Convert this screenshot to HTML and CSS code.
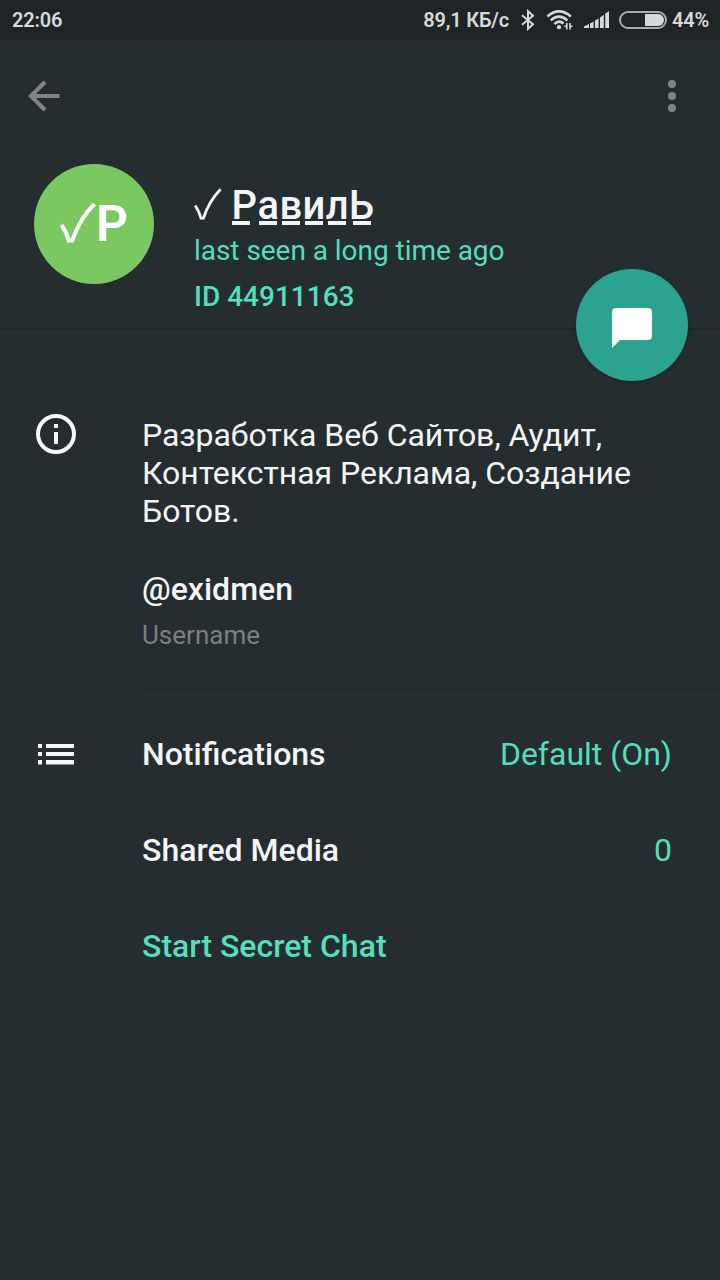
FILE: index.html
```
<!DOCTYPE html>
<html lang="en">
<head>
  <meta charset="UTF-8">
  <title>Profile</title>
  <link rel="stylesheet" href="styles.css">
</head>
<body>
  <!-- Status bar -->
  <div class="status-bar">
    <span class="clock">22:06</span>
    <span class="speed">89,1 КБ/с</span>
    <svg class="bluetooth" width="16" height="22" viewBox="0 0 16 22" fill="none" stroke="#d5d9da" stroke-width="2">
      <path d="M2 6.2L13 15.2L8 19.8V2.2L13 6.8L2 15.8"/>
    </svg>
    <svg class="wifi" width="28" height="22" viewBox="0 0 28 22" fill="none" stroke="#d5d9da" stroke-width="2.6">
      <path d="M1.4 7.4Q13 -2.6 24.8 7.4M4.8 11.4Q13 4 21.4 11.4M8.4 15Q13 10.6 17.6 14.6"/>
      <circle cx="13" cy="18.2" r="2.1" fill="#d5d9da" stroke="none"/>
      <path d="M20.8 14V20.4M24 14V20.4M18.4 17.2H21M24 17.2H26.4" stroke-width="1.6"/>
    </svg>
    <svg class="signal" width="26" height="18" viewBox="0 0 26 18" fill="#d5d9da">
      <path d="M0 17V15.5L5 13V17ZM6 17V12.4L9.6 10.4V17ZM11 17V9.6L14.6 7.4V17ZM16 17V6.4L19.8 3.8V17ZM21.2 17V2.8L25 0V17Z"/>
    </svg>
    <div class="battery"><div class="battery-level"></div></div>
    <span>44%</span>
  </div>

  <!-- Toolbar -->
  <div class="toolbar">
    <svg width="32" height="32" viewBox="0 0 32 32" fill="none" stroke="#828586" stroke-width="4">
      <path d="M31.5 16H3M17 2L3 16L17 30"/>
    </svg>
    <svg width="8" height="32" viewBox="0 0 8 32" fill="#828586">
      <circle cx="4" cy="4" r="4"/>
      <circle cx="4" cy="16" r="4"/>
      <circle cx="4" cy="28" r="4"/>
    </svg>
  </div>

  <div class="profile">
    <div class="avatar">
      <svg width="36" height="42" viewBox="0 0 36 42" fill="none" stroke="#fff" stroke-width="4">
        <path d="M1.5 22Q6.5 29 8.7 37.6H12.2Q20 15 34.5 1"/>
      </svg>
      <span>P</span>
    </div>
    <div class="profile-info">
      <h1>
        <svg width="28" height="32" viewBox="0 0 28 32" fill="none" stroke="#f3f5f6" stroke-width="2.8">
          <path d="M1.2 17.5Q5 23 7 30.2H9.4Q15 13 26.6 1.2"/>
        </svg>
        <b>Р</b><b>а</b><b>в</b><b>и</b><b>л</b><b>Ь</b>
      </h1>
      <p class="last-seen">last seen a long time ago</p>
      <p class="user-id">ID 44911163</p>
    </div>
    <div class="message-button">
      <svg width="40" height="40" viewBox="0 0 40 40" fill="#fff">
        <path d="M4 0H36Q40 0 40 4V28Q40 32 36 32H8L0 40V4Q0 0 4 0Z"/>
      </svg>
    </div>
  </div>

  <div class="section about">
    <svg width="40" height="40" viewBox="0 0 40 40" fill="#f6f8f9">
      <circle cx="20" cy="20" r="18" fill="none" stroke="#f6f8f9" stroke-width="4"/>
      <path d="M18 10H22V14H18ZM18 18H22V30H18Z"/>
    </svg>
    <div class="content">
      <p class="bio">Разработка Веб Сайтов, Аудит, Контекстная Реклама, Создание Ботов.</p>
      <p class="username">@exidmen</p>
      <p class="label">Username</p>
    </div>
  </div>

  <div class="section settings">
    <svg width="36" height="21" viewBox="0 0 36 21" fill="#f6f8f9">
      <path d="M0 0H4V4H0ZM8 0H36V4H8ZM0 8H4V12H0ZM8 8H36V12H8ZM0 16H4V20.5H0ZM8 16H36V20.5H8Z"/>
    </svg>
    <div class="content">
      <div class="row"><span>Notifications</span><span class="value">Default (On)</span></div>
      <div class="row"><span>Shared Media</span><span class="value">0</span></div>
      <div class="row secret">Start Secret Chat</div>
    </div>
  </div>
</body>
</html>
```
FILE: styles.css
```
* {
  box-sizing: border-box;
}

body {
  margin: 0;
  height: 1280px;
  background: #262d30;
  color: #f3f5f6;
  font-family: Roboto, "Noto Sans", sans-serif;
  overflow: hidden;
}

h1, p {
  margin: 0;
}

svg {
  display: block;
  flex-shrink: 0;
}

.status-bar {
  display: flex;
  align-items: center;
  height: 40px;
  padding: 0 11px 0 12px;
  background: #1f2426;
  color: #d5d9da;
  font-size: 20px;
  font-weight: 600;
  letter-spacing: -0.2px;
  white-space: nowrap;
}

.clock {
  margin-right: auto;
}

.bluetooth {
  margin-left: 11px;
}

.wifi {
  margin-left: 10px;
}

.signal {
  margin-left: 10px;
}

.battery {
  width: 48px;
  height: 18px;
  margin: 0 5px 0 9px;
  padding: 1px;
  border: 2px solid #a9adae;
  border-radius: 9px;
}

.battery-level {
  width: 19px;
  height: 12px;
  margin-left: auto;
  background: #d5d9da;
  border-radius: 0 6px 6px 0;
}

.toolbar {
  display: flex;
  align-items: center;
  justify-content: space-between;
  height: 112px;
  padding: 0 44px 0 28px;
}

.profile {
  position: relative;
  display: flex;
  height: 178px;
  padding: 12px 34px 0;
  border-bottom: 2px solid #21272a;
}

.avatar {
  display: flex;
  align-items: center;
  justify-content: center;
  width: 120px;
  height: 120px;
  border-radius: 50%;
  background: #7bc862;
  color: #fff;
  font-size: 50px;
  font-weight: 600;
}

.profile-info {
  margin-left: 40px;
  color: #54debd;
  font-size: 28px;
}

h1 {
  display: flex;
  align-items: center;
  height: 56px;
  margin-top: 14px;
  color: #f3f5f6;
  font-size: 40px;
  font-weight: 500;
}

h1 svg {
  margin: 0 9.5px 5px 0;
}

/* every letter carries its own bar */
h1 b {
  font-weight: 500;
  line-height: 42px;
  letter-spacing: 0.4px;
  background: linear-gradient(#f3f5f6, #f3f5f6) 50% calc(100% - 2px) / 18px 4px no-repeat;
}

h1 b:first-of-type {
  background-position: 0 calc(100% - 2px);
}

.last-seen {
  letter-spacing: -0.04px;
  line-height: 34px;
}

.user-id {
  margin-top: 12px;
  font-weight: 500;
  line-height: 34px;
}

/* floats over the line under the header */
.message-button {
  position: absolute;
  right: 32px;
  bottom: -52.5px;
  display: flex;
  align-items: center;
  justify-content: center;
  width: 112px;
  height: 112px;
  padding-top: 7px;
  border-radius: 50%;
  background: #2ca390;
  box-shadow: 0 1px 3px rgba(0, 0, 0, 0.25);
}

.section {
  display: flex;
}

.content {
  flex: 1;
  font-size: 32px;
}

.about {
  padding: 84px 0 0 36px;
}

.about .content {
  margin-left: 66px;
  height: 277px;
  border-bottom: 2px solid #22292b;
}

.bio {
  width: 520px;
  margin-top: 2px;
  letter-spacing: -0.04px;
  line-height: 38px;
}

.username {
  margin-top: 40px;
  font-weight: 500;
  line-height: 38px;
}

.label {
  margin-top: 11px;
  color: #7a7f81;
  font-size: 26px;
  line-height: 32px;
}

.settings {
  padding: 15px 48px 0 38px;
}

.settings svg {
  margin-top: 38px;
}

.settings .content {
  margin-left: 68px;
}

.row {
  display: flex;
  align-items: center;
  justify-content: space-between;
  height: 96px;
  font-weight: 500;
}

.value {
  color: #54debd;
  font-weight: 400;
}

.secret {
  color: #54debd;
}
```
